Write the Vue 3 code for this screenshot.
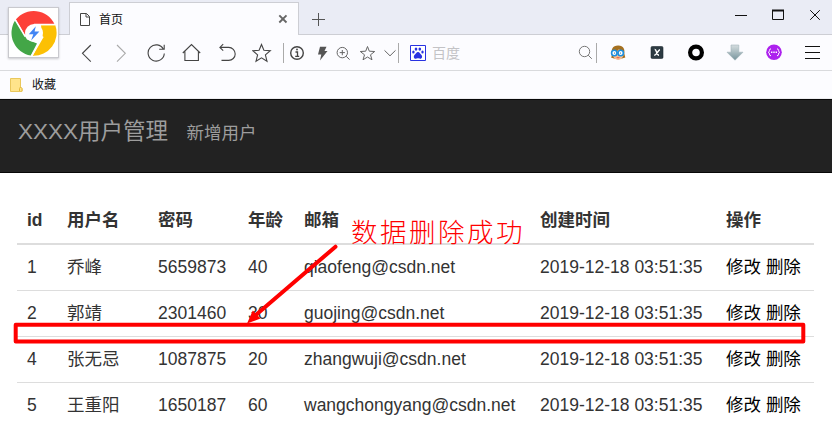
<script setup>
const columns = ['id', '用户名', '密码', '年龄', '邮箱', '创建时间', '操作']
const users = [
  { id: 1, name: '乔峰', password: '5659873', age: 40, email: 'qiaofeng@csdn.net' },
  { id: 2, name: '郭靖', password: '2301460', age: 30, email: 'guojing@csdn.net' },
  { id: 4, name: '张无忌', password: '1087875', age: 20, email: 'zhangwuji@csdn.net' },
  { id: 5, name: '王重阳', password: '1650187', age: 60, email: 'wangchongyang@csdn.net' },
]
const created = '2019-12-18 03:51:35'
</script>

<template>
  <div class="window">
    <header class="tabs">
      <div class="tab">
        <svg class="page-icon" width="12" height="15" viewBox="0 0 12 15"><path d="M1.500 1.500h6l3 3v9h-9zM7 1.500v3.500h3.500" /></svg>
        <span class="tab-title">首页</span>
        <svg class="tab-close" width="10" height="10" viewBox="0 0 10 10"><path d="M1.300 1.300l7.200 7.200M8.500 1.300L1.300 8.500" /></svg>
      </div>
      <svg class="new-tab" width="13" height="13" viewBox="0 0 13 13"><path d="M6.500 0v13M0 6.500h13" /></svg>
      <div class="controls">
        <svg width="12" height="12" viewBox="0 0 12 12"><path d="M0 6.500h12" /></svg>
        <svg width="12" height="12" viewBox="0 0 12 12"><path d="M.5 1v9.500h11V1" /><path d="M0 1.500h12" stroke-width="2" /></svg>
        <svg width="12" height="12" viewBox="0 0 12 12"><path d="M1.200 1.200l9.600 9.600M10.800 1.200L1.200 10.800" /></svg>
      </div>
    </header>

    <nav class="toolbar">
      <div class="history">
        <svg viewBox="0 0 20 20"><path d="M13.800 2L5.500 10.300l8.300 8.300" /></svg>
        <svg class="faded" viewBox="0 0 20 20"><path d="M5 2l8.300 8.300L5 18.600" /></svg>
        <svg viewBox="0 0 20 20"><path d="M16.400 6.200A8.100 8.100 0 1 0 17.300 10.500M17.200 1.700v4.600h-5" /></svg>
        <svg viewBox="0 0 20 20"><path d="M.8 10L9.500 1.500 18.200 10M2.900 8.300v9.200h13.500V8.300" /></svg>
        <svg viewBox="0 0 20 20"><path d="M6.200 1.100L2.900 4.400l3.300 3.200M3 4.400h8.700a6.500 6.500 0 0 1 0 13H4.500" /></svg>
        <svg viewBox="0 0 20 20"><path d="M9.500 1.500l2.400 5.700 6.400.5-4.900 4.200 1.600 6.300-5.500-3.400L4 18.200l1.600-6.300L.7 7.700l6.400-.5z" /></svg>
      </div>
      <i class="divider"></i>
      <div class="page-actions">
        <svg viewBox="0 0 20 20"><circle cx="10" cy="10" r="6.300" stroke-width="1.400" /><path d="M8.500 9h2v4.200M8.200 13.300h4" stroke-width="1.300" /><circle class="solid" cx="10" cy="6.600" r="1" /></svg>
        <svg viewBox="0 0 20 20"><path class="solid" d="M8 3.800h6.500L12.500 8h3L8 17.500l1.300-6.100H6z" /></svg>
        <svg viewBox="0 0 20 20"><circle cx="9.300" cy="9.600" r="5.200" /><path d="M13.200 13.300l3.400 3.300M9.300 7v5.200M6.700 9.600h5.200" /></svg>
        <svg viewBox="0 0 20 20"><path d="M9.500 3.500l1.800 4.700 5.400.3-4.200 3.300 1.500 5-4.500-2.800L5 16.800l1.500-5-4.200-3.300 5.400-.3z" /></svg>
        <svg viewBox="0 0 20 20"><path d="M4.500 7.400l5.500 5.400 5.500-5.400" /></svg>
      </div>
      <i class="divider"></i>
      <div class="search">
        <svg class="paw" width="16" height="16" viewBox="0 0 16 16">
          <path d="M.5.500h15v15H.5z" fill="#fff" stroke="#2932e1" />
          <g fill="#2932e1" stroke="none"><ellipse cx="6" cy="4.100" rx="1.300" ry="1.700" /><ellipse cx="9.800" cy="4.100" rx="1.300" ry="1.700" /><ellipse cx="3.400" cy="7" rx="1.200" ry="1.600" /><ellipse cx="12.500" cy="7" rx="1.200" ry="1.600" /><path d="M8 6.900c1.700 0 1.800 1.600 3.200 2.800 1.500 1.300 1.200 4-1 4-1.100 0-1.200-.4-2.200-.4s-1.200.4-2.300.4c-2.200 0-2.400-2.700-1-4C6.200 8.500 6.400 6.900 8 6.900z" /></g>
        </svg>
        <span>百度</span>
        <svg class="lens" width="15" height="15" viewBox="0 0 15 15"><circle cx="6.500" cy="6.500" r="5.200" /><path d="M10.200 10.200l3.600 3.600" /></svg>
      </div>
      <i class="divider"></i>
      <div class="extensions">
        <svg class="flat" viewBox="0 0 20 20">
          <path d="M3.800 13C2.800 6 4.500 2.700 10 2.500c5.500-.2 7 4 6.300 8l1 4-3.300 1H6l-3-1z" fill="#a5701f" />
          <path d="M4.500 10c3-.5 5-2 6.500-4 1 2 3 3 4.800 3.500 0 4.500-2.300 7.200-5.600 7.400-3.300 0-5.400-3-5.700-6.900z" fill="#f6bd91" />
          <path d="M8.300 14h3.500l-.8 1.300H9z" fill="#e96f55" />
          <g fill="#fff" stroke="#1b8fe0" stroke-width="1.600"><circle cx="6.300" cy="10" r="2.700" /><circle cx="12.700" cy="10" r="2.700" /></g>
          <circle cx="6.600" cy="10" r=".6" fill="#175078" /><circle cx="12.400" cy="10" r=".6" fill="#175078" />
        </svg>
        <svg viewBox="0 0 20 20"><rect x="4" y="3.500" width="12" height="12" rx="1.300" fill="#2c3a42" stroke="#1c292f" stroke-width=".6" /><path d="M7.700 6.500c2-.4 1.700 5.800 4.300 5.800M13 6.700c-2 .2-3.400 5.800-5.800 5.600" stroke="#fff" stroke-width="1.500" /></svg>
        <svg viewBox="0 0 20 20"><circle cx="10" cy="9.500" r="5.900" stroke="#000" stroke-width="4.200" /></svg>
        <svg viewBox="0 0 20 20"><defs><linearGradient id="metal" x2="0" y2="1"><stop stop-color="#d5dddf" /><stop offset="1" stop-color="#77949c" /></linearGradient></defs><path d="M6 2h7.800v7.200H18L10 17.200 2 9.200h4z" fill="url(#metal)" stroke="#a1b3b8" stroke-width=".6" /></svg>
        <svg viewBox="0 0 20 20"><circle cx="10" cy="9.200" r="7.800" fill="#ad21ee" stroke="none" /><path d="M7 5.800c-2.500 0-.8 3.300-2.700 3.500 1.900.2.200 3.500 2.700 3.500M13 5.800c2.500 0 .8 3.300 2.700 3.500-1.900.2-.2 3.500-2.700 3.500" stroke="#fff" /><path d="M7 9.300h6" stroke="#fff" stroke-width="1.400" stroke-dasharray="1.400 .9" /></svg>
        <svg viewBox="0 0 20 20"><path d="M2 3.500h15M2 9.500h15M2 15.500h15" stroke="#111" /></svg>
      </div>
    </nav>

    <div class="bookmarks">
      <svg width="13" height="14" viewBox="0 0 13 14"><path d="M.5.500h10v9l1.500 1v3H.5z" fill="#ffe48b" stroke="#e9c75c" /><path d="M9.500 13v-2.500l1-1.500 1.500 1.500V13" fill="#ffe48b" stroke="#e3b93b" /></svg>
      <span>收藏</span>
    </div>

    <div class="navbar">
      <span class="brand">XXXX用户管理</span>
      <span class="nav-link">新增用户</span>
    </div>

    <main>
      <table>
        <colgroup>
          <col class="c-id" /><col class="c-name" /><col class="c-pass" /><col class="c-age" /><col class="c-mail" /><col class="c-time" /><col />
        </colgroup>
        <thead>
          <tr><th v-for="c in columns" :key="c">{{ c }}</th></tr>
        </thead>
        <tbody>
          <tr v-for="u in users" :key="u.id">
            <td>{{ u.id }}</td>
            <td>{{ u.name }}</td>
            <td>{{ u.password }}</td>
            <td>{{ u.age }}</td>
            <td>{{ u.email }}</td>
            <td>{{ created }}</td>
            <td class="actions"><a>修改</a> <a>删除</a></td>
          </tr>
        </tbody>
      </table>
    </main>

    <svg class="logo" width="54" height="54" viewBox="0 0 54 54">
      <rect x="1.500" y="1.500" width="50" height="50" fill="#fff" stroke="#c9c9ce" />
      <path d="M8.800 13.600A23 23 0 0 1 47.500 18.200H27L18 29z" fill="#fd4038" />
      <path d="M48.300 19.200A23 23 0 0 1 25.700 49.800L35.500 31 34 19.200z" fill="#fcc004" />
      <path d="M8.200 14.300A23 23 0 0 0 23.700 49.500l6.300-12-10-4z" fill="#43a647" />
      <path d="M7.500 12.500l10.700 18.200M48.500 18.600H27M24.700 50L36 30.500" stroke="#fff" stroke-width="1.500" />
      <circle cx="27" cy="27" r="9" fill="#fff" />
      <path d="M28.800 20.200l-7 8h4.500l-2.200 6.200 8.300-9h-4.800z" fill="#4285f4" />
    </svg>

    <svg class="annotation" width="832" height="425" viewBox="0 0 832 425">
      <rect x="15.700" y="324.700" width="787.600" height="16.800" stroke-linejoin="round" />
      <path d="M335.500 246.700L257 314" stroke-linecap="round" />
      <path class="head" d="M247 323.500L252.800 310.500 260.500 318.500z" />
    </svg>
    <div class="note">数据删除成功</div>
  </div>
</template>

<style>
body { margin: 0; overflow: hidden; }
</style>

<style scoped>
.window {
  position: relative;
  width: 832px;
  height: 425px;
  overflow: hidden;
  background: #fff;
  color: #333;
  font-family: "Liberation Sans", "Noto Sans CJK SC", sans-serif;
}
svg { display: block; flex: none; fill: none; stroke: #444; }
.tabs {
  display: flex;
  box-sizing: border-box;
  height: 35px;
  padding-left: 69px;
  background: #eaecf5;
  box-shadow: inset 0 -1px #cdced4;
}
.tab {
  display: flex;
  align-items: center;
  box-sizing: border-box;
  width: 230px;
  height: 33px;
  margin-top: 2px;
  padding: 0 10px 0 9px;
  border: 1px solid #cdced4;
  border-bottom: 0;
  background: #fcfcff;
}
.tab-title { margin-left: 8px; padding-bottom: 2px; color: #111; font-size: 12px; }
.tab-close { margin-left: auto; stroke: #666; stroke-width: 1.900; }
.new-tab { margin: 13px 0 0 13px; stroke: #555; }
.controls { display: flex; gap: 25px; margin: 9px 11px 0 auto; }
.controls svg { stroke: #111; }
.toolbar {
  display: flex;
  align-items: center;
  box-sizing: border-box;
  height: 36px;
  padding-left: 77px;
  border-bottom: 1px solid #d9dadd;
  background: #fcfcff;
}
.history { display: flex; gap: 15px; width: 206px; }
.history svg, .page-actions svg, .extensions svg { width: 20px; height: 20px; }
.history svg { stroke-width: 1.100; }
.history .faded { stroke: #aaa; }
.divider { width: 1px; height: 20px; background: #aaa; }
.page-actions { display: grid; grid-template-columns: 25px 21px 25px 22px 18px; width: 111px; margin-left: 3px; }
.page-actions svg { stroke: #666; }
.page-actions svg:first-child { stroke: #444; }
.page-actions .solid { fill: #555; stroke: none; }
.search { display: flex; align-items: center; width: 185px; margin-left: 11px; margin-right: 1px; color: #c3c3c6; font-size: 14px; }
.search span { margin-left: 6px; padding-bottom: 2px; }
.lens { margin-left: auto; margin-right: 2px; stroke: #777; }
.extensions { display: flex; gap: 19px; margin-left: 11px; }
.extensions .flat { stroke: none; }
.bookmarks {
  display: flex;
  align-items: center;
  box-sizing: border-box;
  height: 28px;
  padding-left: 10px;
  border-bottom: 1px solid #ececef;
  background: #fcfcff;
  color: #111;
  font-size: 12px;
}
.bookmarks span { margin-left: 9px; padding-bottom: 2px; }
.navbar {
  display: flex;
  align-items: baseline;
  box-sizing: border-box;
  height: 74px;
  padding: 16px 0 0 18px;
  border: solid #080808;
  border-width: 1px 0;
  background: #222;
  color: #9d9d9d;
  line-height: 32px;
}
.brand { width: 168.500px; font-size: 22.500px; white-space: nowrap; }
.nav-link { font-size: 17.500px; }
main { padding: 24px 18px 0 17px; }
table { width: 797px; table-layout: fixed; border-collapse: separate; border-spacing: 0; font-size: 17.500px; line-height: 25px; white-space: nowrap; }
.c-id { width: 40px; }
.c-name { width: 91px; }
.c-pass { width: 90px; }
.c-age { width: 56px; }
.c-mail { width: 236px; }
.c-time { width: 186px; }
th, td { box-sizing: border-box; height: 46px; padding: 0 0 0 10px; text-align: left; vertical-align: middle; }
th { height: 48px; border-bottom: 2px solid #ddd; }
td { border-bottom: 1px solid #ddd; }
.actions { color: #000; }
.logo { position: absolute; left: 7px; top: 6px; stroke: none; filter: drop-shadow(0 1px 1px #0003); }
.annotation { position: absolute; inset: 0; stroke: #f00; stroke-width: 4; pointer-events: none; }
.annotation .head { fill: #f00; stroke: none; }
.note { position: absolute; left: 351px; top: 212px; color: #f00; font-family: "Noto Sans CJK SC", sans-serif; font-size: 26.500px; font-weight: 300; letter-spacing: 2.500px; line-height: 38px; white-space: nowrap; }
</style>
